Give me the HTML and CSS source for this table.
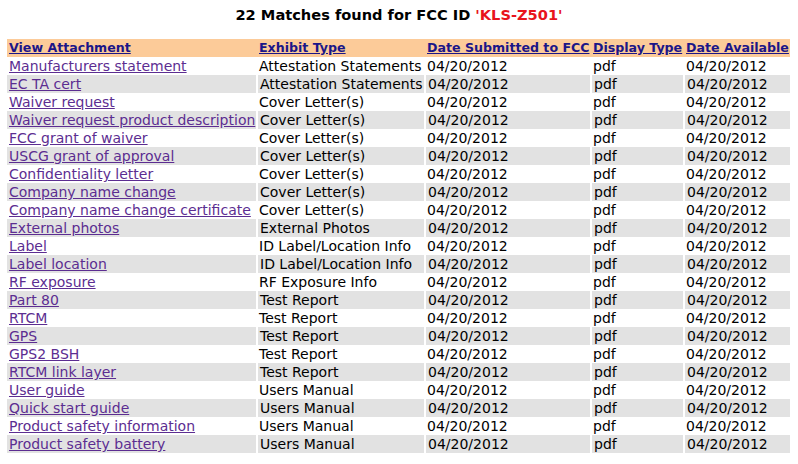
FILE: index.html
```html
<!DOCTYPE html>
<html>
<head>
<meta charset="utf-8">
<link rel="stylesheet" href="styles.css">
</head>
<body>
<h1 class="title">22 Matches found for FCC ID <span class="fccid">'KLS-Z501'</span></h1>
<table class="results">
<colgroup>
<col class="c1"><col class="c2"><col class="c3"><col class="c4"><col class="c5">
</colgroup>
<thead>
<tr class="head">
<th><a href="#">View Attachment</a></th>
<th><a href="#">Exhibit Type</a></th>
<th><a href="#">Date Submitted to FCC</a></th>
<th><a href="#">Display Type</a></th>
<th><a href="#">Date Available</a></th>
</tr>
</thead>
<tbody>
<tr><td><a href="#">Manufacturers statement</a></td><td>Attestation Statements</td><td>04/20/2012</td><td>pdf</td><td>04/20/2012</td></tr>
<tr class="alt"><td><a href="#">EC TA cert</a></td><td>Attestation Statements</td><td>04/20/2012</td><td>pdf</td><td>04/20/2012</td></tr>
<tr><td><a href="#">Waiver request</a></td><td>Cover Letter(s)</td><td>04/20/2012</td><td>pdf</td><td>04/20/2012</td></tr>
<tr class="alt"><td><a href="#">Waiver request product description</a></td><td>Cover Letter(s)</td><td>04/20/2012</td><td>pdf</td><td>04/20/2012</td></tr>
<tr><td><a href="#">FCC grant of waiver</a></td><td>Cover Letter(s)</td><td>04/20/2012</td><td>pdf</td><td>04/20/2012</td></tr>
<tr class="alt"><td><a href="#">USCG grant of approval</a></td><td>Cover Letter(s)</td><td>04/20/2012</td><td>pdf</td><td>04/20/2012</td></tr>
<tr><td><a href="#">Confidentiality letter</a></td><td>Cover Letter(s)</td><td>04/20/2012</td><td>pdf</td><td>04/20/2012</td></tr>
<tr class="alt"><td><a href="#">Company name change</a></td><td>Cover Letter(s)</td><td>04/20/2012</td><td>pdf</td><td>04/20/2012</td></tr>
<tr><td><a href="#">Company name change certificate</a></td><td>Cover Letter(s)</td><td>04/20/2012</td><td>pdf</td><td>04/20/2012</td></tr>
<tr class="alt"><td><a href="#">External photos</a></td><td>External Photos</td><td>04/20/2012</td><td>pdf</td><td>04/20/2012</td></tr>
<tr><td><a href="#">Label</a></td><td>ID Label/Location Info</td><td>04/20/2012</td><td>pdf</td><td>04/20/2012</td></tr>
<tr class="alt"><td><a href="#">Label location</a></td><td>ID Label/Location Info</td><td>04/20/2012</td><td>pdf</td><td>04/20/2012</td></tr>
<tr><td><a href="#">RF exposure</a></td><td>RF Exposure Info</td><td>04/20/2012</td><td>pdf</td><td>04/20/2012</td></tr>
<tr class="alt"><td><a href="#">Part 80</a></td><td>Test Report</td><td>04/20/2012</td><td>pdf</td><td>04/20/2012</td></tr>
<tr><td><a href="#">RTCM</a></td><td>Test Report</td><td>04/20/2012</td><td>pdf</td><td>04/20/2012</td></tr>
<tr class="alt"><td><a href="#">GPS</a></td><td>Test Report</td><td>04/20/2012</td><td>pdf</td><td>04/20/2012</td></tr>
<tr><td><a href="#">GPS2 BSH</a></td><td>Test Report</td><td>04/20/2012</td><td>pdf</td><td>04/20/2012</td></tr>
<tr class="alt"><td><a href="#">RTCM link layer</a></td><td>Test Report</td><td>04/20/2012</td><td>pdf</td><td>04/20/2012</td></tr>
<tr><td><a href="#">User guide</a></td><td>Users Manual</td><td>04/20/2012</td><td>pdf</td><td>04/20/2012</td></tr>
<tr class="alt"><td><a href="#">Quick start guide</a></td><td>Users Manual</td><td>04/20/2012</td><td>pdf</td><td>04/20/2012</td></tr>
<tr><td><a href="#">Product safety information</a></td><td>Users Manual</td><td>04/20/2012</td><td>pdf</td><td>04/20/2012</td></tr>
<tr class="alt"><td><a href="#">Product safety battery</a></td><td>Users Manual</td><td>04/20/2012</td><td>pdf</td><td>04/20/2012</td></tr>
</tbody>
</table>
</body>
</html>
```
FILE: styles.css
```css
html, body {
  margin: 0;
  padding: 0;
  background: #ffffff;
}
body {
  font-family: "DejaVu Sans", Verdana, sans-serif;
  font-size: 14px;
  color: #000000;
  padding: 0 0 0 7px;
}
.title {
  margin: 0;
  padding: 5px 0 0 0;
  height: 39px;
  box-sizing: border-box;
  font-size: 14.6px;
  font-weight: bold;
  text-align: center;
  line-height: 20px;
  width: 784px;
}
.fccid {
  color: #e8141c;
}
.results {
  border-collapse: collapse;
  table-layout: fixed;
  width: 783px;
}
.c1 { width: 250px; }
.c2 { width: 168px; }
.c3 { width: 166px; }
.c4 { width: 93px; }
.c5 { width: 106px; }
.results th,
.results td {
  height: 18px;
  padding: 0 0 0 2px;
  text-align: left;
  white-space: nowrap;
  overflow: hidden;
  line-height: 18px;
  vertical-align: middle;
}
.results th {
  font-size: 12.6px;
}
.head {
  background: #fccb99;
}
.results th a {
  color: #1b1688;
  font-weight: bold;
}
.results td a {
  color: #5c2d91;
}
.alt td {
  background: #e2e2e2;
  border-left: 2px solid #ffffff;
}
.alt td:first-child {
  border-left: 0;
}
```
